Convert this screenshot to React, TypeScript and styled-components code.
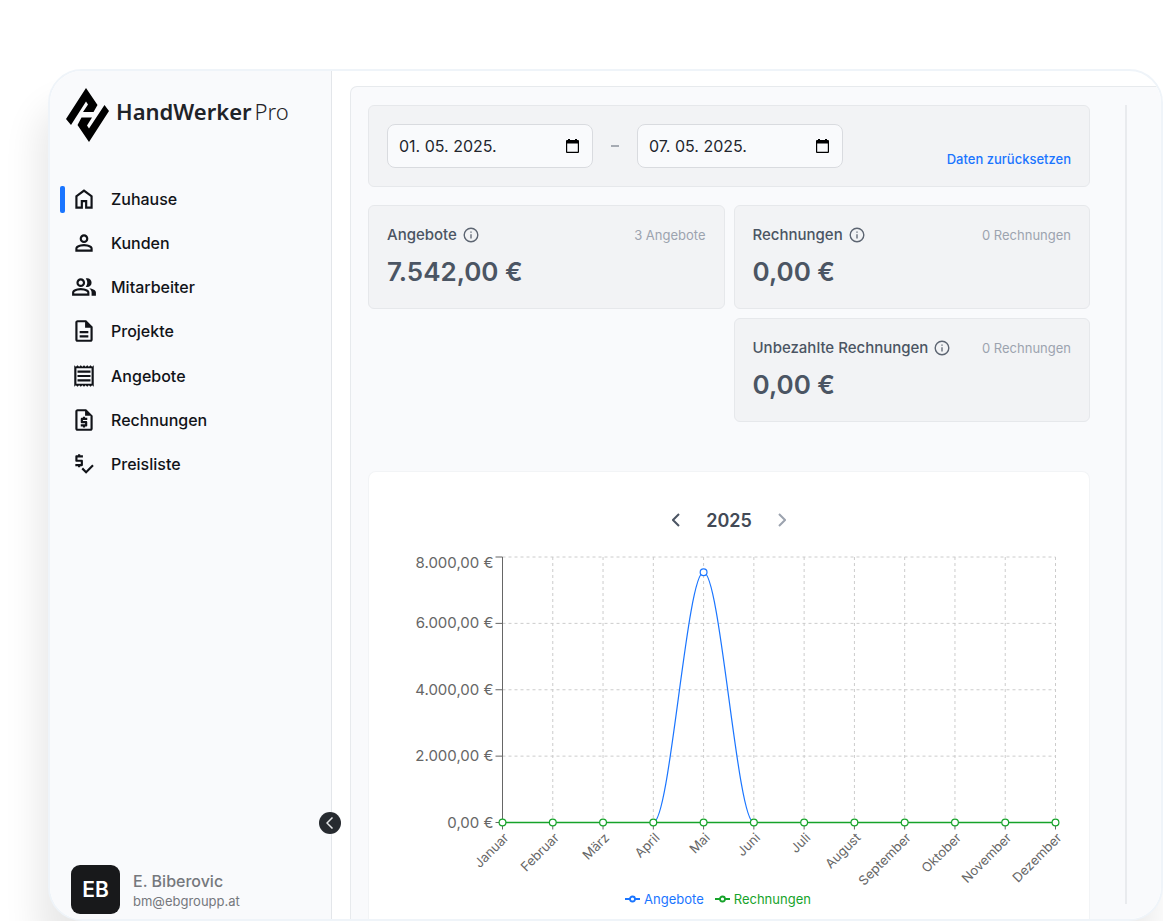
import React from "react";
import styled, { createGlobalStyle } from "styled-components";
import {
  MdOutlineDescription,
  MdOutlinePriceCheck,
  MdOutlineReceipt,
  MdOutlineRequestQuote,
} from "react-icons/md";

const GlobalStyle = createGlobalStyle`
  *, *::before, *::after { box-sizing: border-box; }
  body {
    margin: 0;
    background: #ffffff;
    color: #111318;
    font-family: Inter, "Liberation Sans", sans-serif;
    font-size: 16px;
    overflow-x: hidden;
  }
  button, input { font: inherit; color: inherit; }
  button { border: 0; padding: 0; background: none; cursor: pointer; }
`;

const Page = styled.div`
  padding: 69px 0 0 48px;
  overflow: hidden;
`;

const Frame = styled.div`
  display: flex;
  border: 2px solid #eff4f9;
  border-radius: 34px;
  background: #ffffff;
  box-shadow: -10px 36px 36px rgba(0, 0, 0, 0.09);
`;

const Sidebar = styled.aside`
  position: relative;
  display: flex;
  flex-direction: column;
  flex: none;
  width: 282px;
  padding: 15px 8px 5px;
  border-right: 1px solid #e3e6ea;
  border-radius: 32px 0 0 32px;
  background: #f9fafc;
`;

const Brand = styled.a`
  display: flex;
  align-items: center;
  gap: 7px;
  padding-left: 8px;
  color: #1f2328;
  font-family: "Noto Sans", "Open Sans", sans-serif;
  font-size: 22px;
  line-height: 50px;
  text-decoration: none;
`;

const BrandName = styled.span`
  display: flex;
  gap: 3px;
  padding-bottom: 8px;
`;

const BrandStrong = styled.span`
  font-weight: 600;
`;

const BrandLight = styled.span`
  font-weight: 300;
`;

const Nav = styled.nav`
  display: flex;
  flex-direction: column;
  justify-content: space-between;
  height: 309px;
  margin-top: 33px;
`;

const NavItem = styled.a<{ $active?: boolean }>`
  display: flex;
  align-items: center;
  gap: 14px;
  height: 44px;
  font-weight: 500;
  color: #111318;
  text-decoration: none;

  &::before {
    content: "";
    width: 5px;
    height: 27px;
    margin: 0 -8px 0 2px;
    border-radius: 2px;
    background: ${(p) => (p.$active ? "#1a75ff" : "transparent")};
  }
`;

const CollapseButton = styled.button`
  position: absolute;
  right: -10px;
  bottom: 85px;
  display: grid;
  place-items: center;
  width: 22px;
  height: 22px;
  border-radius: 50%;
  background: #272b30;
`;

const User = styled.div`
  display: flex;
  align-items: center;
  gap: 13px;
  margin-top: auto;
  padding-left: 13px;
`;

const Avatar = styled.div`
  display: grid;
  place-items: center;
  width: 49px;
  height: 49px;
  border-radius: 9px;
  background: #18191b;
  color: #ffffff;
  font-size: 21px;
  font-weight: 600;
`;

const UserText = styled.div`
  padding-top: 3px;
`;

const UserName = styled.div`
  color: #75787d;
  font-weight: 500;
  line-height: 20px;
`;

const UserMail = styled.div`
  color: #75787d;
  font-size: 13px;
  line-height: 20px;
`;

const Main = styled.main`
  display: flex;
  flex: 1;
  min-width: 0;
  overflow: hidden;
  border-radius: 0 32px 32px 0;
  padding: 15px 0 0 18px;
`;

const Panel = styled.div`
  display: flex;
  flex: 1;
  gap: 35px;
  min-width: 0;
  padding: 18px 34px 0 17px;
  border: 1px solid #e7eaed;
  border-width: 1px 0 0 1px;
  border-radius: 7px 0 0 0;
  background: #f9fafc;
`;

const Content = styled.div`
  flex: 1;
  min-width: 0;
`;

const ScrollLine = styled.div`
  width: 2px;
  margin-bottom: 15px;
  background: #e9ebee;
`;

const Card = styled.section`
  border: 1px solid #e6e8eb;
  border-radius: 6px;
  background: #f2f3f5;
`;

const FilterCard = styled(Card)`
  display: flex;
  align-items: center;
  gap: 18px;
  padding: 18px;
`;

const DateField = styled.label`
  display: flex;
  align-items: center;
  width: 206px;
  height: 44px;
  padding: 0 13px 0 11px;
  border: 1px solid #d9dbdf;
  border-radius: 8px;
  background: #f9fafc;
`;

const DateInput = styled.input`
  flex: 1;
  min-width: 0;
  padding: 0;
  border: 0;
  outline: 0;
  background: transparent;
  color: #22262d;
`;

const Dash = styled.span`
  width: 8px;
  height: 2px;
  background: #a6abb3;
`;

const ResetButton = styled.button`
  align-self: flex-end;
  margin-left: auto;
  color: #1a75ff;
  font-size: 13px;
  font-weight: 500;
  line-height: 18px;
`;

const Kpis = styled.div`
  display: grid;
  grid-template-columns: 1fr 1fr;
  gap: 9px;
  margin-top: 18px;
`;

const KpiCard = styled(Card)<{ $column: number }>`
  grid-column: ${(p) => p.$column};
  padding: 17px 18px;
`;

const KpiHead = styled.div`
  display: flex;
  align-items: center;
  gap: 6px;
  color: #4b5563;
  line-height: 24px;
`;

const KpiTitle = styled.h2`
  margin: 0;
  font-size: 15px;
  font-weight: 500;
`;

const KpiCount = styled.span`
  margin-left: auto;
  color: #9ca3af;
  font-size: 13px;
`;

const KpiValue = styled.div`
  margin-top: 6px;
  color: #4b5563;
  font-size: 26px;
  font-weight: 600;
  line-height: 38px;
`;

const ChartCard = styled(Card)`
  margin-top: 49px;
  padding: 33px 0 9px;
  border-color: #f2f4f6;
  border-bottom: 0;
  border-radius: 8px 8px 0 0;
  background: #ffffff;
`;

const YearNav = styled.div`
  display: flex;
  align-items: center;
  justify-content: center;
  gap: 19px;
  color: #4b5563;
`;

const YearButton = styled.button`
  display: grid;
  place-items: center;
  width: 22px;
  height: 30px;
  color: #4b5563;

  &:disabled { color: #9ca3af; }
`;

const Year = styled.span`
  font-size: 18px;
  font-weight: 600;
  color: #434a56;
`;

const Plot = styled.svg`
  display: block;
  width: 100%;
  margin-top: 10px;
  overflow: visible;
`;

const GridLine = styled.line`
  stroke: #cccccc;
  stroke-dasharray: 3 3;
`;

const Axis = styled.line`
  stroke: #666666;
`;

const ValueLabel = styled.text`
  fill: #666666;
  font-size: 15px;
  text-anchor: end;
`;

const MonthLabel = styled.text`
  fill: #666666;
  font-size: 13px;
  text-anchor: end;
`;

const Legend = styled.ul`
  display: flex;
  justify-content: center;
  gap: 11px;
  margin: 0;
  padding: 0 22px 0 0;
  list-style: none;
  font-size: 13px;
  line-height: 22px;
`;

const LegendItem = styled.li<{ $color: string }>`
  display: flex;
  align-items: center;
  gap: 4px;
  color: ${(p) => p.$color};
`;

const BLUE = "#1a75ff";
const GREEN = "#16a32a";

const Symbol = ({ d }: { d: string }) => (
  <svg width="26" height="26" viewBox="0 -960 960 960" fill="currentColor" aria-hidden="true">
    <path d={d} />
  </svg>
);

const HOME = "M240-200h120v-240h240v240h120v-360L480-740 240-560v360Zm-80 80v-480l320-240 320 240v480H520v-240h-80v240H160Z";
const PERSON =
  "M480-480q-66 0-113-47t-47-113q0-66 47-113t113-47q66 0 113 47t47 113q0 66-47 113t-113 47ZM160-160v-112q0-34 17.5-62.5T224-378q62-31 126-46.5T480-440q66 0 130 15.5T736-378q29 15 46.5 43.5T800-272v112H160Zm80-80h480v-32q0-11-5.5-20T700-306q-54-27-109-40.5T480-360q-56 0-111 13.5T260-306q-9 5-14.5 14t-5.5 20v32Zm240-320q33 0 56.5-23.5T560-640q0-33-23.5-56.5T480-720q-33 0-56.5 23.5T400-640q0 33 23.5 56.5T480-560Z";
const GROUP =
  "M40-160v-112q0-34 17.5-62.5T104-378q62-31 126-46.5T360-440q66 0 130 15.5T616-378q29 15 46.5 43.5T680-272v112H40Zm720 0v-120q0-44-24.5-84.5T666-434q51 6 96 20.5t84 35.5q36 20 55 44.5t19 53.5v120H760ZM360-480q-66 0-113-47t-47-113q0-66 47-113t113-47q66 0 113 47t47 113q0 66-47 113t-113 47Zm400-160q0 66-47 113t-113 47q-11 0-28-2.5t-28-5.5q27-32 41.5-71t14.5-81q0-42-14.5-81T544-792q14-5 28-6.5t28-1.5q66 0 113 47t47 113ZM120-240h480v-32q0-11-5.5-20T580-306q-54-27-109-40.5T360-360q-56 0-111 13.5T140-306q-9 5-14.5 14t-5.5 20v32Zm240-320q33 0 56.5-23.5T440-640q0-33-23.5-56.5T360-720q-33 0-56.5 23.5T280-640q0 33 23.5 56.5T360-560Z";

const NAV = [
  { label: "Zuhause", icon: <Symbol d={HOME} /> },
  { label: "Kunden", icon: <Symbol d={PERSON} /> },
  { label: "Mitarbeiter", icon: <Symbol d={GROUP} /> },
  { label: "Projekte", icon: <MdOutlineDescription size={26} /> },
  { label: "Angebote", icon: <MdOutlineReceipt size={26} /> },
  { label: "Rechnungen", icon: <MdOutlineRequestQuote size={26} /> },
  { label: "Preisliste", icon: <MdOutlinePriceCheck size={26} /> },
];

const Logo = () => (
  <svg width="43" height="54" viewBox="0 0 43 54" fill="#000" aria-hidden="true">
    <path d="M20 0 31.500 17 27.500 24H17L22 16.500 20 13.500 5 37 0 31Z" />
    <path d="M38.500 17 43 23 23 54 11.500 37 15.500 29.500H26L21 37.500 23 40.500Z" />
  </svg>
);

const CalendarIcon = () => (
  <svg width="13" height="14" viewBox="0 0 13 14" aria-hidden="true">
    <path d="M0 2Q0 1 1 1H2V0H4V1H9V0H11V1H12Q13 1 13 2V13Q13 14 12 14H1Q0 14 0 13ZM1.200 4.500V12.800H11.800V4.500Z" fill="#000" fillRule="evenodd" />
  </svg>
);

const InfoIcon = () => (
  <svg width="16" height="16" viewBox="0 0 16 16" fill="none" stroke="#5d6572" aria-hidden="true">
    <circle cx="8" cy="8" r="6.8" strokeWidth="1.4" />
    <path d="M8 7.2V11.4M8 4.4V5.8" strokeWidth="1.3" />
  </svg>
);

const DatePicker = ({ label, value }: { label: string; value: string }) => (
  <DateField>
    <DateInput aria-label={label} defaultValue={value} />
    <CalendarIcon />
  </DateField>
);

type KpiProps = { title: string; count: string; value: string; column: number };

const Kpi = ({ title, count, value, column }: KpiProps) => (
  <KpiCard $column={column}>
    <KpiHead>
      <KpiTitle>{title}</KpiTitle>
      <InfoIcon />
      <KpiCount>{count}</KpiCount>
    </KpiHead>
    <KpiValue>{value}</KpiValue>
  </KpiCard>
);

const MONTHS = ["Januar", "Februar", "März", "April", "Mai", "Juni", "Juli", "August", "September", "Oktober", "November", "Dezember"];
const OFFERS = [0, 0, 0, 0, 7542, 0, 0, 0, 0, 0, 0, 0];
const TICKS = [
  { value: 8000, label: "8.000,00 €" },
  { value: 6000, label: "6.000,00 €" },
  { value: 4000, label: "4.000,00 €" },
  { value: 2000, label: "2.000,00 €" },
  { value: 0, label: "0,00 €" },
];
const LEFT = 133.5;
const RIGHT = 686.5;
const TOP = 12;
const BOTTOM = 277.5;
const STEP = (RIGHT - LEFT) / 11;
const xOf = (i: number) => LEFT + i * STEP;
const yOf = (v: number) => BOTTOM - (v / 8000) * (BOTTOM - TOP);

const offersPath = OFFERS.map((v, i) =>
  i === 0
    ? `M${xOf(0)} ${yOf(v)}`
    : `C${xOf(i - 1) + STEP / 3} ${yOf(OFFERS[i - 1])} ${xOf(i) - STEP / 3} ${yOf(v)} ${xOf(i)} ${yOf(v)}`
).join("");

const Chart = () => (
  <Plot viewBox="0 0 720 343" role="img" aria-label="Angebote und Rechnungen 2025">
    {TICKS.map((t) => (
      <GridLine key={t.value} x1={LEFT} x2={RIGHT} y1={yOf(t.value)} y2={yOf(t.value)} />
    ))}
    {MONTHS.map((m, i) => (
      <GridLine key={m} x1={xOf(i)} x2={xOf(i)} y1={TOP} y2={BOTTOM} />
    ))}
    <Axis x1={LEFT} x2={LEFT} y1={TOP} y2={BOTTOM} />
    {TICKS.map((t) => (
      <g key={t.value}>
        <Axis x1={LEFT - 7} x2={LEFT} y1={yOf(t.value)} y2={yOf(t.value)} />
        <ValueLabel x={LEFT - 9} y={yOf(t.value) + (t.value === 8000 ? 11 : 5)}>{t.label}</ValueLabel>
      </g>
    ))}
    {MONTHS.map((m, i) => (
      <g key={m}>
        <Axis x1={xOf(i)} x2={xOf(i)} y1={BOTTOM} y2={BOTTOM + 7} />
        <MonthLabel transform={`translate(${xOf(i)} ${BOTTOM + 9}) rotate(-45)`} dy="10">{m}</MonthLabel>
      </g>
    ))}
    <path d={offersPath} fill="none" stroke={BLUE} strokeWidth="1.2" />
    {OFFERS.map((v, i) =>
      v > 0 ? <circle key={i} cx={xOf(i)} cy={yOf(v)} r="3.4" fill="#fff" stroke={BLUE} strokeWidth="1.2" /> : null
    )}
    <path d={`M${LEFT} ${BOTTOM}H${RIGHT}`} stroke={GREEN} strokeWidth="1.3" />
    {MONTHS.map((m, i) => (
      <circle key={m} cx={xOf(i)} cy={BOTTOM} r="3.4" fill="#fff" stroke={GREEN} strokeWidth="1.2" />
    ))}
  </Plot>
);

const LegendMark = () => (
  <svg width="15" height="8" viewBox="0 0 15 8" fill="none" stroke="currentColor" strokeWidth="1.8" aria-hidden="true">
    <path d="M0 4H5M10 4H15" />
    <circle cx="7.5" cy="4" r="2.5" />
  </svg>
);

const Chevron = ({ right }: { right?: boolean }) => (
  <svg width="8" height="14" viewBox="0 0 8 14" fill="none" stroke="currentColor" strokeWidth="2" aria-hidden="true">
    <path d={right ? "M1 1 7 7 1 13" : "M7 1 1 7 7 13"} />
  </svg>
);

export default function App() {
  return (
    <>
      <GlobalStyle />
      <Page>
        <Frame>
          <Sidebar>
            <Brand href="#">
              <Logo />
              <BrandName>
                <BrandStrong>HandWerker</BrandStrong>
                <BrandLight>Pro</BrandLight>
              </BrandName>
            </Brand>
            <Nav>
              {NAV.map((item, i) => (
                <NavItem key={item.label} href="#" $active={i === 0}>
                  {item.icon}
                  {item.label}
                </NavItem>
              ))}
            </Nav>
            <User>
              <Avatar>EB</Avatar>
              <UserText>
                <UserName>E. Biberovic</UserName>
                <UserMail>bm@ebgroupp.at</UserMail>
              </UserText>
            </User>
            <CollapseButton aria-label="Menü einklappen">
              <svg width="8" height="12" viewBox="0 0 8 12" fill="none" stroke="#e4e6e8" strokeWidth="1.5" aria-hidden="true">
                <path d="M6.500 0.500 1 6 6.500 11.500" />
              </svg>
            </CollapseButton>
          </Sidebar>
          <Main>
            <Panel>
              <Content>
                <FilterCard>
                  <DatePicker label="Von" value="01. 05. 2025." />
                  <Dash />
                  <DatePicker label="Bis" value="07. 05. 2025." />
                  <ResetButton>Daten zurücksetzen</ResetButton>
                </FilterCard>
                <Kpis>
                  <Kpi column={1} title="Angebote" count="3 Angebote" value="7.542,00 €" />
                  <Kpi column={2} title="Rechnungen" count="0 Rechnungen" value="0,00 €" />
                  <Kpi column={2} title="Unbezahlte Rechnungen" count="0 Rechnungen" value="0,00 €" />
                </Kpis>
                <ChartCard>
                  <YearNav>
                    <YearButton aria-label="Vorheriges Jahr"><Chevron /></YearButton>
                    <Year>2025</Year>
                    <YearButton aria-label="Nächstes Jahr" disabled><Chevron right /></YearButton>
                  </YearNav>
                  <Chart />
                  <Legend>
                    <LegendItem $color={BLUE}><LegendMark />Angebote</LegendItem>
                    <LegendItem $color={GREEN}><LegendMark />Rechnungen</LegendItem>
                  </Legend>
                </ChartCard>
              </Content>
              <ScrollLine />
            </Panel>
          </Main>
        </Frame>
      </Page>
    </>
  );
}
